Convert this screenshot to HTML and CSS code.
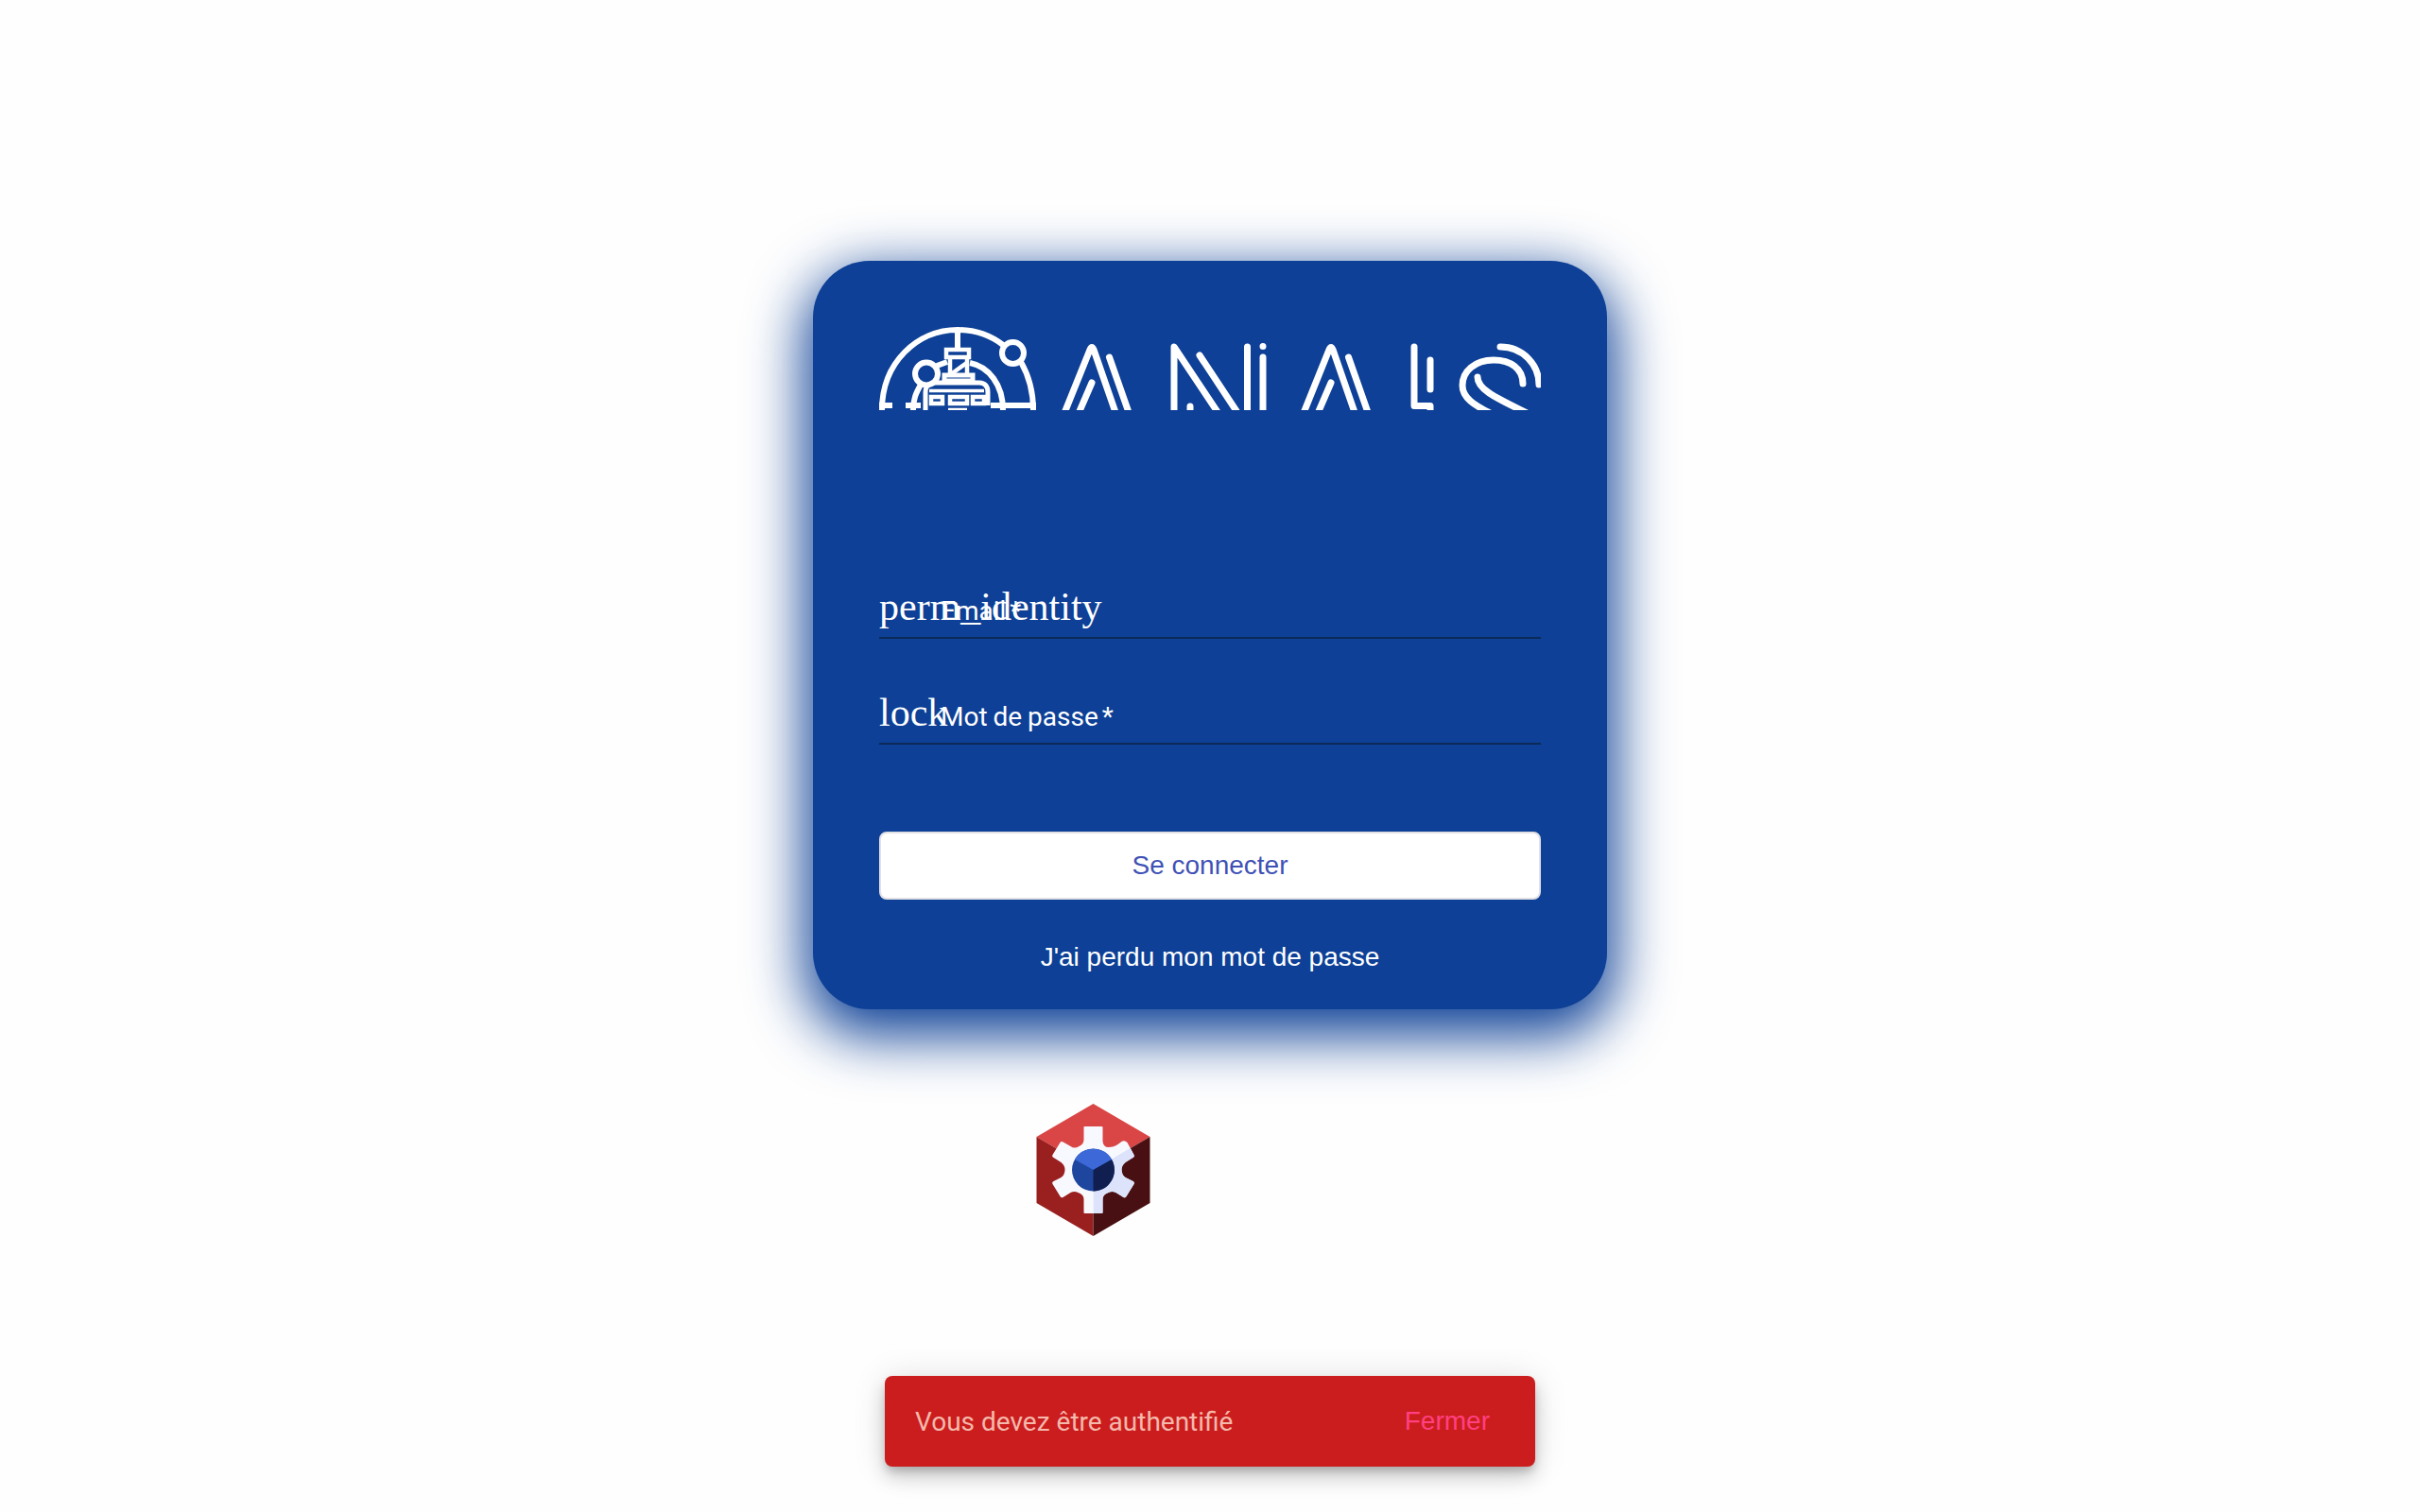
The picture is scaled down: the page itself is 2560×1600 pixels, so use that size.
FILE: index.html
```html
<!DOCTYPE html>
<html lang="fr">
<head>
<meta charset="utf-8">
<title>Connexion</title>
<link rel="stylesheet" href="styles.css">
</head>
<body>
<main class="page">
  <form class="card">
    <svg class="logo" viewBox="0 0 700 88" fill="none" stroke="#fff" stroke-width="7">
      <g stroke-width="6">
        <path d="M3 88C3 38 40 3 83 3C102 3 118 9 131 19M150 37C158 51 163 68 163 88M83 3V23"/>
        <circle cx="141.500" cy="27.500" r="11.500"/>
        <circle cx="50" cy="49.500" r="12"/>
        <path d="M0 83H14M28 83H44M118 83H166" />
        <path d="M36 88C36 76 39 70 44 61M61 41L72 37M96 38C116 42 131 61 131 88"/>
        <path d="M71 24H95V32H71ZM75 34V50M93 34V50M76 50L94 37" stroke-width="4.500"/>
        <path d="M69 51H99V57H69Z" stroke-width="5"/>
        <path d="M49 88V69C49 63 53 59 59 59H106C112 59 115 63 115 69V83" stroke-width="5"/>
        <path d="M53 67.500H111" stroke-width="3.500"/>
        <path d="M55 74H67V81H55ZM75 74H93V81H75ZM99 74H111V81H99Z" stroke-width="4.500"/>
        <path d="M73 87H93" stroke-width="2.500"/>
      </g>
      <g stroke-linecap="round" stroke-linejoin="round">
        <path d="M194 96L223 24Q225 19 227 24L252 96M243.500 32L266 96M225 59L209 96"/>
        <path d="M312 94V21L358 90M339 30L378 89M329 84V90M389.500 21V94M406 32V94M406 20.500V20.600"/>
        <path d="M447 96L476 24Q478 19 480 24L505 96M496.500 32L519 96M478 59L462 96"/>
        <path d="M566 21V83.500H583V90M583 35V66"/>
        <path d="M657 21C681 21 698 40 698 61M681 60C681 44 668 35 650 35C630 35 617 47 617 62C617 75 630 83 646 91M633 53C633 65 648 73 685 91"/>
      </g>
    </svg>
    <label class="field">
      <span class="icon">perm_identity</span>
      <span class="hint">Email <span class="required">*</span></span>
    </label>
    <label class="field field-password">
      <span class="icon">lock</span>
      <span class="hint">Mot de passe <span class="required">*</span></span>
    </label>
    <button class="submit" type="button">Se connecter</button>
    <a class="lost">J'ai perdu mon mot de passe</a>
  </form>
  <svg class="badge" viewBox="0 0 120 140">
    <defs>
      <clipPath id="right"><path d="M60 70L130 29V150H60Z"/></clipPath>
      <path id="gear" d="M50 24.500Q50 24 51 24H69Q70 24 70 25V40Q71 46 76 46Q82 46 86 43L90 40Q93 38 96 41L103 54Q104 56 102 57L94 62Q90 65 90 70Q90 75 94 78L102 82Q104 83 103 85L95 98Q94 100 92 99L84 94Q80 92 76 94Q70 96 70 101V115Q70 116 69 116H51Q50 116 50 115V101Q50 96 44 94Q40 92 36 94L28 99Q26 100 25 98L17 85Q16 83 18 82L26 78Q30 75 30 70Q30 65 26 62L18 57Q16 56 17 54L25 41Q26 39 29 41L36 45Q40 48 45 45Q50 43 50 38Z"/>
    </defs>
    <path d="M60 0L120 35L60 70L0 35Z" fill="#da4545"/>
    <path d="M0 35L60 70V140L0 105Z" fill="#9a2020"/>
    <path d="M120 35L60 70V140L120 105Z" fill="#481012"/>
    <use href="#gear" fill="#f7f9ff"/>
    <use href="#gear" fill="#dce3fa" clip-path="url(#right)"/>
    <circle cx="60" cy="70" r="22.500" fill="#1e469f"/>
    <path d="M60 70L40.500 59A22.500 22.500 0 0 1 79.500 59Z" fill="#3d69d8"/>
    <path d="M60 70L79.500 59A22.500 22.500 0 0 1 60 92.500Z" fill="#101e50"/>
  </svg>
  <div class="snackbar">
    <span class="message">Vous devez être authentifié</span>
    <span class="dismiss">Fermer</span>
  </div>
</main>
</body>
</html>
```

FILE: styles.css
```css
body {
  margin: 0;
  background: #fefefe;
  font-family: Roboto, sans-serif;
}

.page {
  box-sizing: border-box;
  height: 1600px;
  padding-top: 276px;
  display: flex;
  flex-direction: column;
  align-items: center;
  overflow: hidden;
}

.card {
  box-sizing: border-box;
  flex: none;
  width: 840px;
  height: 792px;
  padding: 70px;
  display: flex;
  flex-direction: column;
  border-radius: 60px;
  background: #0d4096;
  color: #fff;
  box-shadow: 0 20px 60px 8px #0d4096;
}

.card > * {
  flex: none;
}

.logo {
  display: block;
  width: 700px;
  height: 88px;
  overflow: hidden;
}

.field {
  position: relative;
  box-sizing: border-box;
  height: 62px;
  margin-top: 180px;
  border-bottom: 2px solid #0b2a57;
}

.field-password {
  margin-top: 50px;
}

.icon {
  display: block;
  font: 42px/56px "Liberation Serif", serif;
}

.hint {
  position: absolute;
  left: 65px;
  top: 17px;
  font-size: 28px;
  line-height: 32px;
  word-spacing: -1px;
}

.required {
  margin-left: -2px;
}

.submit {
  box-sizing: border-box;
  height: 72px;
  margin-top: 92px;
  padding: 0;
  border: 2px solid #e0e0e5;
  border-radius: 8px;
  background: #fff;
  color: #3f51b5;
  font: 28px/68px "Liberation Sans", sans-serif;
}

.lost {
  margin-top: 44px;
  text-align: center;
  font: 28px/34px "Liberation Sans", sans-serif;
}

.badge {
  flex: none;
  width: 121px;
  height: 140px;
  margin: 100px 247px 0 0;
}

.snackbar {
  box-sizing: border-box;
  flex: none;
  width: 688px;
  height: 96px;
  margin-top: 148px;
  padding: 0 48px 0 32px;
  display: flex;
  align-items: center;
  justify-content: space-between;
  border-radius: 8px;
  background: #cb1d1d;
  color: #f4b9ac;
  font-size: 28px;
  box-shadow: 0 6px 10px -2px rgba(0, 0, 0, .2), 0 12px 20px rgba(0, 0, 0, .14), 0 2px 36px rgba(0, 0, 0, .12);
}

.dismiss {
  color: #ff4081;
  font-family: "Liberation Sans", sans-serif;
}
```
